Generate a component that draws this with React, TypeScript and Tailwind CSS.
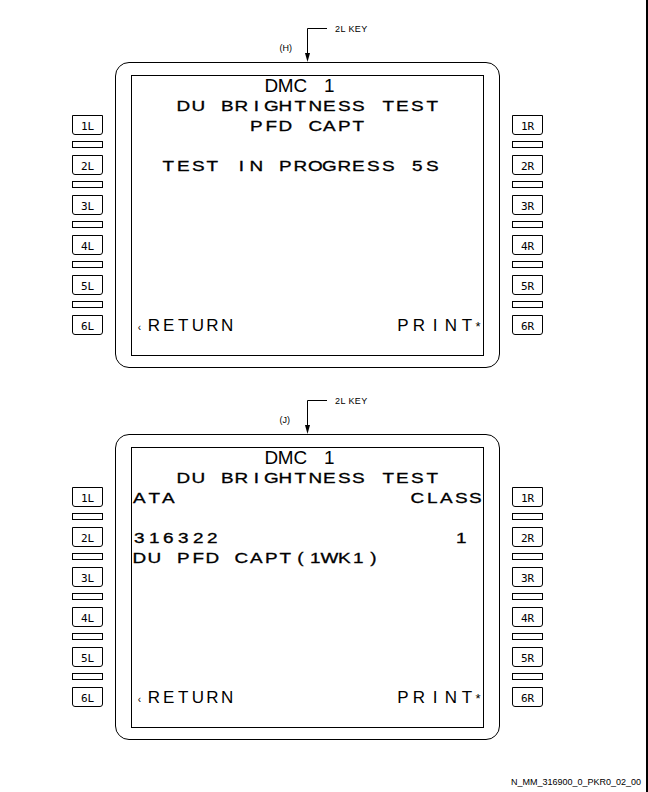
const SANS = "font-['Liberation_Sans',Arial,sans-serif]";

type PanelData = {
  tag: string;
  lines: string[];
};

const panels: PanelData[] = [
  {
    tag: "(H)",
    lines: [
      "         DMC 1",
      "   DU BRIGHTNESS TEST",
      "        PFD CAPT",
      "",
      "  TEST IN PROGRESS 5S",
    ],
  },
  {
    tag: "(J)",
    lines: [
      "         DMC 1",
      "   DU BRIGHTNESS TEST",
      "ATA                CLASS",
      "",
      "316322                1",
      "DU PFD CAPT(1WK1)",
    ],
  },
];

function Row({ text, title }: { text: string; title?: boolean }) {
  const cells = text.padEnd(24, " ").split("");
  return (
    <div
      className={`grid h-[20px] grid-cols-[repeat(24,minmax(0,1fr))] items-center leading-[20px] text-black ${
        title ? "text-[18px]" : "text-[14px]"
      }`}
    >
      {cells.map((ch, i) => (
        <span
          key={i}
          className={`text-center ${title ? "scale-x-[1.05]" : "scale-x-[1.35] [-webkit-text-stroke:0.3px_black]"}`}
        >
          {ch === " " ? "" : ch}
        </span>
      ))}
    </div>
  );
}

function PromptRow() {
  return (
    <div className="flex h-[20px] items-baseline justify-between pr-[2px] text-[17px] leading-[20px] text-black">
      <div className="flex items-baseline">
        <span className="w-[14.625px] text-center text-[10px]">‹</span>
        {"RETURN".split("").map((ch, i) => (
          <span key={i} className="w-[14.625px] text-center">
            {ch}
          </span>
        ))}
      </div>
      <div className="flex items-baseline">
        {"PRINT".split("").map((ch, i) => (
          <span key={i} className="w-[16px] text-center">
            {ch}
          </span>
        ))}
        <span className="w-[6px] text-center text-[13px]">*</span>
      </div>
    </div>
  );
}

function KeyColumn({ side }: { side: "L" | "R" }) {
  return (
    <div className="mt-[53px] flex w-[31px] flex-col">
      {[1, 2, 3, 4, 5, 6].map((n) => (
        <div key={n} className="flex flex-col">
          <div className="flex h-[20px] items-center justify-center rounded-b-[3px] border border-black pt-[2px] font-['DejaVu_Sans_Mono',monospace] text-[11px] leading-none text-black">
            {n}
            {side}
          </div>
          {n < 6 && <div className="mt-[6px] mb-[7px] h-[7px] border border-black" />}
        </div>
      ))}
    </div>
  );
}

function Callout({ tag }: { tag: string }) {
  return (
    <svg width="648" height="42" viewBox="0 0 648 42" className="block">
      <path d="M327 8.5H307.5V34" stroke="black" strokeWidth="1" fill="none" />
      <polygon points="305,33 310,33 307.5,42" fill="black" />
      <text x="335" y="11.5" fontSize="9" fontFamily="Liberation Sans, Arial, sans-serif" letterSpacing="0.4">
        2L KEY
      </text>
      <text x="279.5" y="30.5" fontSize="9" fontFamily="Liberation Sans, Arial, sans-serif">
        {tag}
      </text>
    </svg>
  );
}

function Panel({ data }: { data: PanelData }) {
  const rows = [...data.lines];
  while (rows.length < 12) rows.push("");
  return (
    <div className="flex flex-col">
      <Callout tag={data.tag} />
      <div className="flex items-start">
        <div className="ml-[72px]">
          <KeyColumn side="L" />
        </div>
        <div className="ml-[12px] h-[306px] w-[385px] rounded-[14px] border border-black px-[15px] pt-[12px] pb-[11px]">
          <div className={`flex h-full w-full flex-col border border-black ${SANS}`}>
            {rows.map((line, i) => (
              <Row key={i} text={line} title={i === 0} />
            ))}
            <PromptRow />
          </div>
        </div>
        <div className="ml-[12px]">
          <KeyColumn side="R" />
        </div>
      </div>
    </div>
  );
}

export default function App() {
  return (
    <div className={`flex h-[792px] w-[648px] flex-col overflow-hidden border-r-2 border-black bg-white pt-[20px] ${SANS}`}>
      <Panel data={panels[0]} />
      <div className="mt-[24px]">
        <Panel data={panels[1]} />
      </div>
      <div className="mt-[38px] flex justify-end pr-[5px] text-[9px] leading-[9px] text-black">
        N_MM_316900_0_PKR0_02_00
      </div>
    </div>
  );
}
